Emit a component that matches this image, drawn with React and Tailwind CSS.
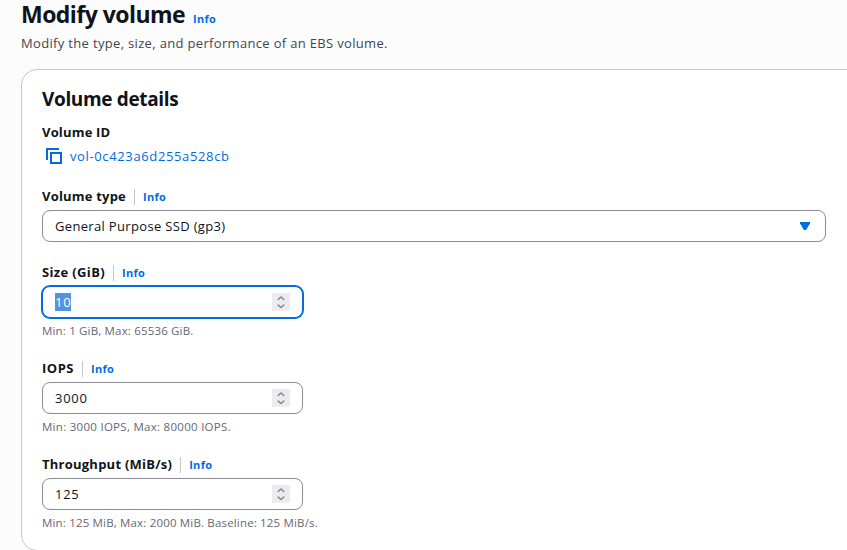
function Info() {
  return <a className="text-[11px] leading-[18px] font-bold text-[#006ce0] tracking-[0.3px]">Info</a>;
}

function Label({ children, spacing }) {
  return (
    <div className="flex h-5 items-center">
      <span className={`pb-0.5 text-[13px] leading-[18px] font-bold whitespace-nowrap ${spacing}`}>{children}</span>
      <span className="mx-2 h-4 w-px bg-[#c6c6cd]" />
      <Info />
    </div>
  );
}

function Stepper() {
  return (
    <span className="flex h-[18px] w-[18px] items-center justify-center bg-[#ebebf0]">
      <svg width="18" height="18" viewBox="0 0 18 18" fill="none" stroke="#8c8c94" strokeWidth="1.5">
        <path d="M5.7 6.9 9 3.9l3.3 3M5.7 11.6 9 14.6l3.3-3" />
      </svg>
    </span>
  );
}

function NumberField({ label, spacing, value, hint, hintSpacing, focused }) {
  return (
    <div>
      <Label spacing={spacing}>{label}</Label>
      <div
        className={`mt-[3px] flex h-8 w-[261px] items-center justify-between rounded-lg border bg-white pr-3 pl-3 ${
          focused ? "border-[#006ce0] shadow-[0_0_0_1px_#006ce0]" : "border-[#8c8c94]"
        }`}
      >
        <span className={`text-[13px] leading-[18px] tracking-[0.75px] ${focused ? "w-4 bg-[#5294e2] text-white" : ""}`}>{value}</span>
        <Stepper />
      </div>
      <div className={`mt-[5px] h-4 text-[11.5px] leading-4 whitespace-nowrap text-[#656871] ${hintSpacing}`}>{hint}</div>
    </div>
  );
}

export default function App() {
  return (
    <main className="h-[550px] w-[847px] overflow-clip bg-[#fcfcfd] pl-[21px] font-['Open_Sans','Noto_Sans',sans-serif] text-[#0f141a]">
      <header className="h-[69px]">
        <div className="flex h-7 items-baseline">
          <h1 className="text-[23px] leading-7 font-bold tracking-[-0.54px]">Modify volume</h1>
          <span className="ml-2"><Info /></span>
        </div>
        <p className="mt-[5px] text-[13px] leading-5 text-[#424650] tracking-[0.33px]">
          Modify the type, size, and performance of an EBS volume.
        </p>
      </header>
      <section className="h-[482px] w-[846px] rounded-2xl border border-[#c6c6cd] bg-white px-5 pt-[17px]">
        <h2 className="text-[19px] leading-6 font-bold tracking-[-0.35px]">Volume details</h2>
        <div className="mt-[11px] text-[13px] leading-5 font-bold tracking-[0.18px]">Volume ID</div>
        <div className="mt-1 flex h-5 items-center pl-1 text-[#006ce0]">
          <svg width="16" height="16" viewBox="0 0 16 16" fill="none" stroke="currentColor" strokeWidth="2">
            <path d="M1 12V1h12M5 5h10v10H5z" />
          </svg>
          <span className="ml-2 text-[13px] leading-5 tracking-[0.63px]">vol-0c423a6d255a528cb</span>
        </div>
        <div className="mt-[21px]">
          <Label spacing="tracking-[0.2px]">Volume type</Label>
          <div className="mt-[3px] flex h-8 w-[784px] items-center justify-between rounded-lg border border-[#8c8c94] pr-[14px] pl-3">
            <span className="text-[13px] leading-5 tracking-[0.33px]">General Purpose SSD (gp3)</span>
            <svg width="12" height="8" viewBox="0 0 12 8"><path d="M1 0h10v1.5L7 8H5L1 1.5z" fill="#006ce0" /></svg>
          </div>
        </div>
        <div className="mt-[21px] flex flex-col gap-5">
          <NumberField label="Size (GiB)" spacing="tracking-[0.36px]" value="10" hint="Min: 1 GiB, Max: 65536 GiB." hintSpacing="tracking-[0.17px]" focused />
          <NumberField label="IOPS" spacing="tracking-[0.5px]" value="3000" hint="Min: 3000 IOPS, Max: 80000 IOPS." hintSpacing="tracking-[0.28px]" />
          <NumberField label="Throughput (MiB/s)" spacing="tracking-[0.24px]" value="125" hint="Min: 125 MiB, Max: 2000 MiB. Baseline: 125 MiB/s." hintSpacing="tracking-[0.17px]" />
        </div>
      </section>
    </main>
  );
}
